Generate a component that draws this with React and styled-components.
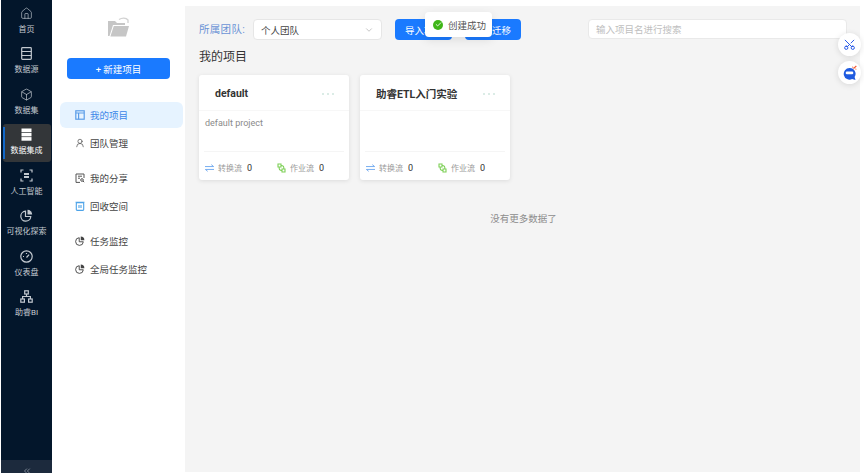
import React from 'react';
import styled, { createGlobalStyle } from 'styled-components';
import { Home, Box, UserRound, ChevronsLeft, ChevronDown, Scissors, Check } from 'lucide-react';

const FONT = `Roboto, "Noto Sans CJK SC", sans-serif`;

const GlobalStyle = createGlobalStyle`
  html, body { margin: 0; padding: 0; background: #fff; }
  body { font-family: ${FONT}; width: 864px; height: 473px; overflow: hidden; }
  * { box-sizing: border-box; }
`;

const Page = styled.div`
  position: relative;
  display: flex;
  width: 864px;
  height: 473px;
  padding-left: 1px;
  background: #fff;
  overflow: hidden;
`;

const Rail = styled.nav`
  width: 51px;
  flex: none;
  height: 100%;
  background: #03162b;
  display: flex;
  flex-direction: column;
  align-items: center;
  padding-top: 3px;
`;

const RailItem = styled.div`
  position: relative;
  width: 48px;
  height: 38px;
  margin-bottom: 2.45px;
  display: flex;
  flex-direction: column;
  align-items: center;
  padding-top: 4px;
  gap: 4px;
  border-radius: 3px;
  color: ${(p) => (p.$active ? '#fff' : '#c3c9d0')};
  background: ${(p) => (p.$active ? '#333639' : 'transparent')};
  svg {
    flex: none;
  }
  ${(p) =>
    p.$active
      ? `&::before { content: ''; position: absolute; left: 0; top: 3px; bottom: 3px; width: 2px; background: #1268c8; }`
      : ''}
`;

const RailLabel = styled.span`
  font-size: 8px;
  line-height: 12px;
  white-space: nowrap;
  color: inherit;
`;

const RailFoot = styled.div`
  margin-top: auto;
  width: 100%;
  height: 13px;
  background: #1c2a3d;
  color: #8b95a1;
  display: flex;
  justify-content: center;
  align-items: flex-start;
  padding-top: 6px;
`;

const SidePanel = styled.aside`
  width: 133px;
  flex: none;
  display: flex;
  flex-direction: column;
  align-items: center;
  padding-top: 16px;
`;

const FolderWrap = styled.div`
  height: 22px;
  margin-bottom: 20px;
`;

const NewButton = styled.button`
  width: 103px;
  height: 21px;
  border: 0;
  border-radius: 4px;
  background: #1a7aff;
  color: #fff;
  font-family: ${FONT};
  font-size: 9.5px;
  padding: 0;
`;

const SideMenu = styled.ul`
  list-style: none;
  margin: 23px 0 0;
  padding: 0 0 0 8px;
  width: 100%;
`;

const SideItem = styled.li`
  width: 123px;
  height: 26px;
  margin-bottom: ${(p) => p.$gap || 2}px;
  padding-left: 15px;
  display: flex;
  align-items: center;
  gap: 5px;
  border-radius: 6px;
  font-size: 9.5px;
  color: ${(p) => (p.$active ? '#3c86e8' : '#444')};
  background: ${(p) => (p.$active ? '#e6f3ff' : 'transparent')};
  svg {
    flex: none;
  }
`;

const Main = styled.main`
  width: 675px;
  flex: none;
  margin-top: 6px;
  height: 466px;
  background: #f4f4f4;
  padding: 13px 12px 0 14px;
  display: flex;
  flex-direction: column;
`;

const TopBar = styled.div`
  display: flex;
  align-items: flex-start;
  height: 21px;
`;

const TeamLabel = styled.span`
  width: 54px;
  font-size: 10.5px;
  line-height: 21px;
  color: #6b93d6;
  letter-spacing: 0.3px;
  white-space: nowrap;
`;

const TeamSelect = styled.div`
  width: 129px;
  height: 21px;
  background: #fff;
  border: 1px solid #e6e6e6;
  border-radius: 4px;
  padding: 0 7px;
  display: flex;
  align-items: center;
  justify-content: space-between;
  font-size: 9.5px;
  color: #444;
  svg {
    color: #bbb;
  }
`;

const ActionButton = styled.button`
  width: ${(p) => p.$w}px;
  height: 21px;
  margin-left: ${(p) => p.$ml}px;
  border: 0;
  border-radius: 4px;
  background: #1a7aff;
  color: #fff;
  font-family: ${FONT};
  font-size: 9.5px;
  text-align: ${(p) => p.$align || 'center'};
  padding: 0 ${(p) => p.$pr || 0}px 0 ${(p) => p.$pl || 0}px;
`;

const SearchBox = styled.div`
  width: 259px;
  height: 20px;
  margin-left: 67px;
  background: #fff;
  border: 1px solid #e9e9e9;
  border-radius: 4px;
  padding-left: 7px;
  display: flex;
  align-items: center;
  font-size: 9.5px;
  color: #c0c0c0;
`;

const SectionTitle = styled.h2`
  margin: 8px 0 9px;
  font-size: 12px;
  line-height: 18px;
  font-weight: 400;
  color: #333;
`;

const CardRow = styled.div`
  display: flex;
  gap: 11px;
`;

const Card = styled.article`
  width: 150px;
  height: 105px;
  background: #fff;
  border-radius: 3px;
  box-shadow: 0 1px 4px rgba(0, 0, 0, 0.1);
  display: flex;
  flex-direction: column;
`;

const CardHead = styled.header`
  height: 36px;
  flex: none;
  padding: 2px 15px 0 ${(p) => p.$pl}px;
  display: flex;
  align-items: center;
  justify-content: space-between;
  border-bottom: 1px solid #f7f7f7;
`;

const CardTitle = styled.span`
  font-size: 10.5px;
  font-weight: 700;
  color: #333;
`;

const Dots = styled.span`
  display: flex;
  gap: 3px;
  i {
    width: 2px;
    height: 2px;
    border-radius: 50%;
    background: #cfe6de;
  }
`;

const CardBody = styled.p`
  margin: 0 5px;
  padding: 5px 0 0 1px;
  flex: 1;
  font-size: 9px;
  line-height: 14px;
  color: #8a8a8a;
  border-bottom: 1px solid #f5f5f5;
`;

const CardFoot = styled.footer`
  height: 28px;
  flex: none;
  display: flex;
  align-items: center;
  padding: 3px 0 0 6px;
`;

const Stat = styled.div`
  width: 74px;
  display: flex;
  align-items: center;
  font-size: 8px;
  color: #9a9a9a;
  svg {
    flex: none;
    margin-right: 4px;
  }
  b {
    font-weight: 400;
    font-size: 9px;
    color: #333;
    margin-left: 5px;
  }
`;

const EmptyHint = styled.div`
  margin-top: 31px;
  text-align: center;
  font-size: 9.5px;
  color: #8c8c8c;
`;

const Toast = styled.div`
  position: absolute;
  left: 425px;
  top: 12px;
  width: 67px;
  height: 25px;
  background: #fff;
  border-radius: 4px;
  box-shadow: 0 3px 10px rgba(0, 0, 0, 0.1);
  display: flex;
  align-items: center;
  padding-left: 8px;
  gap: 5px;
  font-size: 9.5px;
  color: #555;
`;

const ToastIcon = styled.span`
  width: 10px;
  height: 10px;
  border-radius: 50%;
  background: #3fb618;
  color: #fff;
  display: flex;
  align-items: center;
  justify-content: center;
`;

const FloatButton = styled.div`
  position: absolute;
  left: 838px;
  top: ${(p) => p.$top}px;
  width: 23px;
  height: 23px;
  border-radius: 50%;
  background: #fff;
  box-shadow: 0 1px 6px rgba(0, 0, 0, 0.12);
  display: flex;
  align-items: center;
  justify-content: center;
  color: #2456e6;
`;

const ScissorsUp = styled(Scissors)`
  transform: rotate(-90deg);
`;

const stroke = { fill: 'none', stroke: 'currentColor', strokeWidth: 1.2 };

const RowsIcon = () => (
  <svg width="13" height="13" viewBox="0 0 13 13" {...stroke}>
    <rect x="1.7" y="0.7" width="9.6" height="11.6" rx="0.8" />
    <path d="M1.7 4.5h9.6M1.7 8.5h9.6" />
  </svg>
);

const ServerIcon = () => (
  <svg width="13" height="13" viewBox="0 0 13 13" fill="currentColor">
    <rect x="1.5" y="0.5" width="10" height="3.6" />
    <rect x="1.5" y="4.8" width="10" height="3.6" />
    <rect x="1.5" y="9.1" width="10" height="3.6" />
  </svg>
);

const ScanIcon = () => (
  <svg width="13" height="13" viewBox="0 0 13 13" {...stroke}>
    <path d="M1 3.5V1h2.5M9.5 1H12v2.5M1 9.5V12h2.5M9.5 12H12V9.5" />
    <rect x="4" y="4" width="5" height="2" fill="currentColor" stroke="none" />
    <rect x="4" y="7" width="5" height="2" fill="currentColor" stroke="none" />
  </svg>
);

const PieIcon = ({ size = 13 }) => (
  <svg width={size} height={size} viewBox="0 0 13 13" {...stroke}>
    <path d="M5.5 2.2a5 5 0 1 0 5.3 5.3H5.5z" />
    <path d="M7.5 0.8a4.8 4.8 0 0 1 4.7 4.7H7.5z" fill="currentColor" stroke="none" />
  </svg>
);

const GaugeIcon = () => (
  <svg width="13" height="13" viewBox="0 0 13 13" {...stroke}>
    <circle cx="6.5" cy="6.5" r="5.7" />
    <path d="M6.5 7.5l2.6-2.8M3 6.5h1M6.5 3v1" />
  </svg>
);

const OrgIcon = () => (
  <svg width="13" height="13" viewBox="0 0 13 13" {...stroke}>
    <rect x="4.7" y="0.8" width="3.6" height="3.2" />
    <rect x="0.8" y="9" width="3.6" height="3.2" />
    <rect x="8.6" y="9" width="3.6" height="3.2" />
    <path d="M6.5 4v2.5M2.6 9V6.5h7.8V9" />
  </svg>
);

const FolderIcon = () => (
  <svg width="23" height="22" viewBox="0 0 23 22">
    <path d="M1 5h7l2 2h8v2H6L2.5 20H1z" fill="#c6c6c6" />
    <path d="M6.8 10H22l-3 10.5H3.4z" fill="#c6c6c6" />
    <path d="M12 3.5c3-2 7-2 9 .5v3" fill="none" stroke="#d2d2d2" strokeWidth="1.3" />
  </svg>
);

const PanelIcon = () => (
  <svg width="10" height="10" viewBox="0 0 10 10" fill="none" stroke="#5b9de8" strokeWidth="1.2">
    <rect x="0.8" y="0.8" width="8.4" height="8.4" />
    <path d="M0.8 3h8.4M3.6 3v6.2" />
  </svg>
);

const ShareIcon = () => (
  <svg width="10" height="10" viewBox="0 0 10 10" fill="none" stroke="#555" strokeWidth="1">
    <path d="M9 5V1H1v8.4h4" />
    <path d="M3 3.2h4M3 5.2h2" />
    <circle cx="7" cy="7" r="1.3" />
    <path d="M8 8l1.2 1.2" />
  </svg>
);

const BinIcon = () => (
  <svg width="10" height="10" viewBox="0 0 10 10" fill="none" stroke="#4da3e8" strokeWidth="1.1">
    <rect x="1.3" y="1.6" width="7.4" height="7.8" rx="0.8" />
    <path d="M0.5 1.2h9M4 4v3M6 4v3" />
  </svg>
);

const SwapIcon = () => (
  <svg width="9" height="8" viewBox="0 0 10 8" fill="none" stroke="#6aa5ee" strokeWidth="1">
    <path d="M0 2.4h9.6L7 0.3M10 5.6H0.4L3 7.7" />
  </svg>
);

const JobIcon = () => (
  <svg width="9" height="10" viewBox="0 0 9 10" fill="none" stroke="#7ccf55" strokeWidth="1.1">
    <path d="M1 1h3v3h-3zM5 6h3v3h-3z" />
    <path d="M4 2.5c2.5 0 3 1 2.8 3.5M5 7.5C2.5 7.5 2 6.5 2.2 4" />
  </svg>
);

const ChatIcon = () => (
  <svg width="16" height="16" viewBox="0 0 16 16">
    <path d="M7.5 3a5.8 5.8 0 1 0 2.6 11l3.4 1-0.9-3A5.8 5.8 0 0 0 7.5 3z" fill="#1f5be0" />
    <rect x="3.7" y="6.6" width="7.6" height="2.6" rx="1.3" fill="#fff" />
    <path d="M11.5 3.6l2.8-2.6" stroke="#f0542c" strokeWidth="1.1" />
    <path d="M10.6 1.6l0.5 1.4M14.4 4.2l-1.2-0.2" stroke="#f0542c" strokeWidth="0.8" />
  </svg>
);

const railItems = [
  { label: '首页', icon: <Home size={13} strokeWidth={1.2} /> },
  { label: '数据源', icon: <RowsIcon /> },
  { label: '数据集', icon: <Box size={13} strokeWidth={1.3} /> },
  { label: '数据集成', icon: <ServerIcon />, active: true },
  { label: '人工智能', icon: <ScanIcon /> },
  { label: '可视化探索', icon: <PieIcon /> },
  { label: '仪表盘', icon: <GaugeIcon /> },
  { label: '助睿BI', icon: <OrgIcon /> },
];

const projects = [
  { title: 'default', pl: 16, desc: 'default project' },
  { title: '助睿ETL入门实验', pl: 16, desc: '' },
];

export default function App() {
  return (
    <Page>
      <GlobalStyle />
      <Rail>
        {railItems.map(({ label, icon, active }) => (
          <RailItem key={label} $active={active}>
            {icon}
            <RailLabel>{label}</RailLabel>
          </RailItem>
        ))}
        <RailFoot>
          <ChevronsLeft size={10} />
        </RailFoot>
      </Rail>

      <SidePanel>
        <FolderWrap>
          <FolderIcon />
        </FolderWrap>
        <NewButton>+ 新建项目</NewButton>
        <SideMenu>
          <SideItem $active>
            <PanelIcon />
            我的项目
          </SideItem>
          <SideItem $gap={9}>
            <UserRound size={10} strokeWidth={1.6} />
            团队管理
          </SideItem>
          <SideItem>
            <ShareIcon />
            我的分享
          </SideItem>
          <SideItem $gap={9}>
            <BinIcon />
            回收空间
          </SideItem>
          <SideItem>
            <PieIcon size={10} />
            任务监控
          </SideItem>
          <SideItem>
            <PieIcon size={10} />
            全局任务监控
          </SideItem>
        </SideMenu>
      </SidePanel>

      <Main>
        <TopBar>
          <TeamLabel>所属团队:</TeamLabel>
          <TeamSelect>
            个人团队
            <ChevronDown size={10} />
          </TeamSelect>
          <ActionButton $w={57} $ml={13} $align="left" $pl={10}>
            导入项目
          </ActionButton>
          <ActionButton $w={56} $ml={13} $align="right" $pr={10}>
            项目迁移
          </ActionButton>
          <SearchBox>输入项目名进行搜索</SearchBox>
        </TopBar>
        <SectionTitle>我的项目</SectionTitle>
        <CardRow>
          {projects.map((p) => (
            <Card key={p.title}>
              <CardHead $pl={p.pl}>
                <CardTitle>{p.title}</CardTitle>
                <Dots>
                  <i />
                  <i />
                  <i />
                </Dots>
              </CardHead>
              <CardBody>{p.desc}</CardBody>
              <CardFoot>
                <Stat>
                  <SwapIcon />
                  转换流<b>0</b>
                </Stat>
                <Stat>
                  <JobIcon />
                  作业流<b>0</b>
                </Stat>
              </CardFoot>
            </Card>
          ))}
        </CardRow>
        <EmptyHint>没有更多数据了</EmptyHint>
      </Main>

      <Toast>
        <ToastIcon>
          <Check size={7} strokeWidth={3} />
        </ToastIcon>
        创建成功
      </Toast>
      <FloatButton $top={33}>
        <ScissorsUp size={13} strokeWidth={1.8} />
      </FloatButton>
      <FloatButton $top={61}>
        <ChatIcon />
      </FloatButton>
    </Page>
  );
}
